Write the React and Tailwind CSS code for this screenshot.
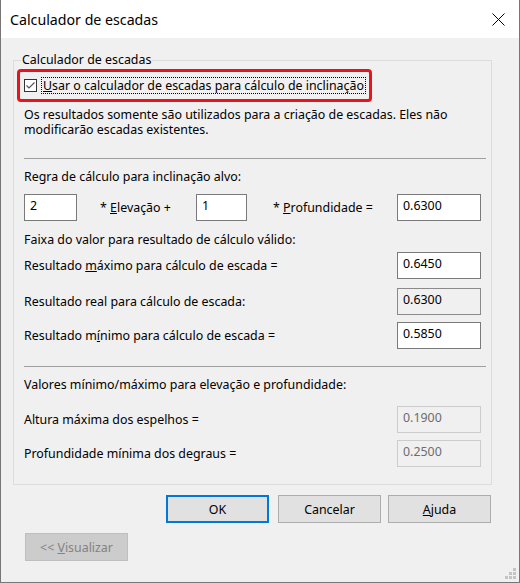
export default function App() {
  const box = "w-[84px] h-[27px] border px-[5px] pt-[3px] text-[12.4px] leading-[15px]";
  return (
    <div className="relative w-[520px] h-[583px] bg-[#f0f0f0] border-x border-b border-[#767676] font-['Noto_Sans',sans-serif] text-[12.4px] leading-[15px] text-black flex flex-col">
      <div className="h-[38px] bg-white flex items-center justify-between pl-[9px] pr-[14px]">
        <span className="text-[14.2px] leading-[18px] mt-[1px]">Calculador de escadas</span>
        <svg width="13" height="13" viewBox="0 0 13 13" className="mt-[1px]">
          <path d="M0.5 0.5L12.5 12.5M12.5 0.5L0.5 12.5" stroke="#000" strokeWidth="1" fill="none" />
        </svg>
      </div>

      <div className="relative ml-[12px] mt-[22px] w-[479px] border border-[#dcdcdc] pl-[10px] pr-[4px] pb-[17px] flex flex-col">
        <span className="absolute left-[7px] top-[-9px] px-[1px] bg-[#f0f0f0]">Calculador de escadas</span>

        <div className="self-start ml-[-7px] mt-[8px] h-[33px] border-[3px] border-[#e8141b] rounded-[4px] flex items-center pl-[4px] pr-[3px]">
          <div className="w-[13px] h-[13px] border border-[#333] bg-white flex items-center justify-center">
            <svg width="11" height="11" viewBox="0 0 11 11">
              <path d="M1.5 5.5L4 8L9.5 2.5" stroke="#555" strokeWidth="1.2" fill="none" />
            </svg>
          </div>
          <span className="ml-[4px] border border-dotted border-black px-[1px] leading-[15px]">
            <span className="underline">U</span>sar o calculador de escadas para cálculo de inclinação
          </span>
        </div>

        <p className="mt-[5px]">
          Os resultados somente são utilizados para a criação de escadas. Eles não
          <br />
          modificarão escadas existentes.
        </p>

        <div className="mt-[21px] h-px w-[462px] bg-[#a0a0a0]" />

        <p className="mt-[10px]">Regra de cálculo para inclinação alvo:</p>

        <div className="mt-[10px] flex items-center">
          <div className="w-[53px] h-[27px] border border-[#7a7a7a] bg-white px-[5px] pt-[3px]">2</div>
          <span className="ml-[23px] w-[96px]">* <span className="underline">E</span>levação +</span>
          <div className="w-[51px] h-[27px] border border-[#7a7a7a] bg-white px-[5px] pt-[3px]">1</div>
          <span className="ml-[26px] w-[124px]">* <span className="underline">P</span>rofundidade =</span>
          <div className={`${box} border-[#7a7a7a] bg-white`}>0.6300</div>
        </div>

        <p className="mt-[11px]">Faixa do valor para resultado de cálculo válido:</p>

        <div className="mt-[5px] flex items-center justify-between w-[457px]">
          <span>Resultado <span className="underline">m</span>áximo para cálculo de escada =</span>
          <div className={`${box} border-[#7a7a7a] bg-white`}>0.6450</div>
        </div>
        <div className="mt-[9px] flex items-center justify-between w-[457px]">
          <span>Resultado real para cálculo de escada:</span>
          <div className={`${box} border-[#8a8a8a] bg-[#f0f0f0]`}>0.6300</div>
        </div>
        <div className="mt-[7px] flex items-center justify-between w-[457px]">
          <span>Resultado m<span className="underline">í</span>nimo para cálculo de escada =</span>
          <div className={`${box} border-[#7a7a7a] bg-white`}>0.5850</div>
        </div>

        <div className="mt-[17px] h-px w-[462px] bg-[#a0a0a0]" />

        <p className="mt-[10px]">Valores mínimo/máximo para elevação e profundidade:</p>

        <div className="mt-[14px] flex items-center justify-between w-[457px]">
          <span>Altura máxima dos espelhos =</span>
          <div className={`${box} border-[#cccccc] bg-[#f0f0f0] text-[#6d6d6d]`}>0.1900</div>
        </div>
        <div className="mt-[7px] flex items-center justify-between w-[457px]">
          <span>Profundidade mínima dos degraus =</span>
          <div className={`${box} border-[#cccccc] bg-[#f0f0f0] text-[#6d6d6d]`}>0.2500</div>
        </div>
      </div>

      <div className="mt-[10px] flex pl-[165px]">
        <button className="w-[103px] h-[28px] border-2 border-[#0078d7] bg-[#e1e1e1]">OK</button>
        <button className="ml-[9px] w-[103px] h-[28px] border border-[#adadad] bg-[#e1e1e1]">Cancelar</button>
        <button className="ml-[7px] w-[103px] h-[28px] border border-[#adadad] bg-[#e1e1e1]"><span className="underline">A</span>juda</button>
      </div>

      <div className="mt-[10px] flex pl-[24px]">
        <button className="w-[103px] h-[28px] border border-[#bfbfbf] bg-[#cccccc] text-[#838383]">&lt;&lt; <span className="underline">V</span>isualizar</button>
      </div>

      <svg className="absolute right-[2px] bottom-[2px]" width="12" height="12" viewBox="0 0 12 12">
        <rect x="8" y="0" width="3" height="3" fill="#c4c4c4" />
        <rect x="4" y="4" width="3" height="3" fill="#c4c4c4" />
        <rect x="8" y="4" width="3" height="3" fill="#c4c4c4" />
        <rect x="0" y="8" width="3" height="3" fill="#c4c4c4" />
        <rect x="4" y="8" width="3" height="3" fill="#c4c4c4" />
        <rect x="8" y="8" width="3" height="3" fill="#c4c4c4" />
      </svg>
    </div>
  );
}
